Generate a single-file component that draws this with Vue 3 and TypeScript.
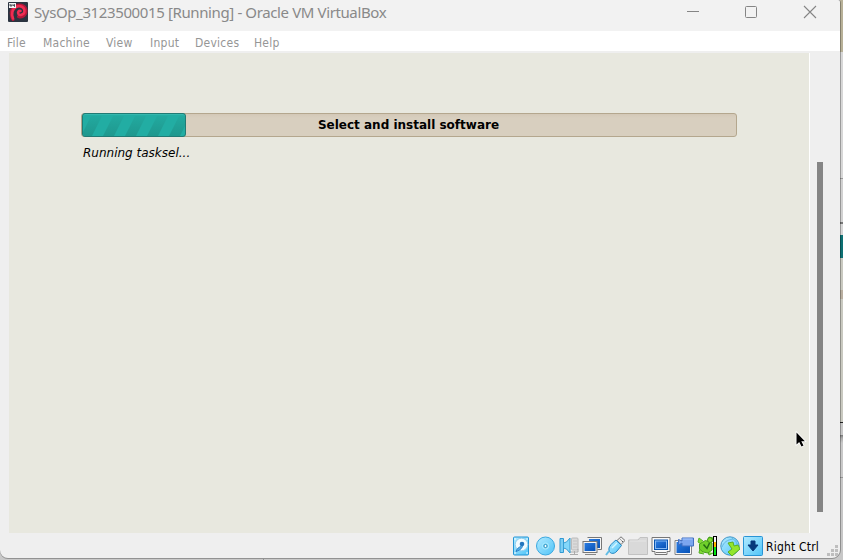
<script setup lang="ts">
interface MenuItem {
  label: string
}

const menu: MenuItem[] = [
  { label: 'File' },
  { label: 'Machine' },
  { label: 'View' },
  { label: 'Input' },
  { label: 'Devices' },
  { label: 'Help' },
]

const progress = 16
const stripes: number[] = [0, 1, 2, 3, 4]
</script>

<template>
  <div class="desktop">
    <div class="window">
      <header class="titlebar">
        <svg class="app-icon" width="20" height="20" viewBox="0 0 20 20">
          <rect width="20" height="20" rx="1" fill="#2b3440" />
          <path d="M5 17.500C2.500 13 2.500 8 6 5c4-3.500 11-2 12 3 .8 5-3.500 8-7.500 6.500" fill="none" stroke="#b3183a" stroke-width="3" stroke-linecap="round" />
          <path d="M5 16.500C3 12 4.500 6.500 8 5c4-2 8.500 0 8.500 4 0 3.500-4.500 5-6 3-1-1.500 0-3.500 2-3" fill="none" stroke="#f02d52" stroke-width="2.600" stroke-linecap="round" />
          <rect x="1" y="1" width="7" height="5" fill="#f4f4f4" />
          <path d="M2 2v2h2V3H2M5 2v1.500h2M6.500 2v3" fill="none" stroke="#3b4048" stroke-width=".8" />
        </svg>
        <h1 class="title">SysOp_3123500015 [Running] - Oracle VM VirtualBox</h1>
        <svg class="controls" width="132" height="16" viewBox="0 0 132 16">
          <path d="M1 7.500h12" stroke="#858585" />
          <rect x="59.500" y="2.500" width="11" height="11" rx="1" fill="none" stroke="#858585" />
          <path d="M118 2l12 12M130 2l-12 12" stroke="#858585" stroke-width="1.100" />
        </svg>
      </header>

      <nav class="menubar">
        <span v-for="item in menu" :key="item.label">{{ item.label }}</span>
      </nav>

      <div class="body">
        <main class="guest">
          <div class="progress">
            <div class="bar" :style="{ width: progress + '%' }">
              <svg width="104" height="22" viewBox="0 0 104 22">
                <defs>
                  <linearGradient id="stripe" x1="0" y1="0" x2="0" y2="1">
                    <stop offset="0" stop-color="#22a99f" />
                    <stop offset="1" stop-color="#1f988e" />
                  </linearGradient>
                </defs>
                <path v-for="n in stripes" :key="n" :transform="`translate(${n * 22} 0)`" d="M8 2h11L9 22H-2Z" fill="url(#stripe)" />
              </svg>
            </div>
            <span class="progress-label">Select and install software</span>
          </div>
          <p class="detail">Running tasksel...</p>
          <svg class="cursor" width="12" height="18" viewBox="0 0 12 18">
            <path d="M1.500 1.500v12l2.700-2.500 2.300 4.500 2-1-2.200-4.300h3.600Z" fill="#000" stroke="#fff" stroke-width="1.600" paint-order="stroke" />
          </svg>
        </main>
        <aside class="scroll"><div class="thumb"></div></aside>
      </div>

      <footer class="statusbar">
        <div class="icons">
          <svg viewBox="0 0 20 20">
            <defs>
              <linearGradient id="sky" x1="0" y1="0" x2="1" y2="1"><stop stop-color="#b3eaff" /><stop offset="1" stop-color="#4fc4f8" /></linearGradient>
              <linearGradient id="blue" x1="0" y1="0" x2="1" y2="1"><stop stop-color="#2a7be0" /><stop offset="1" stop-color="#0752b7" /></linearGradient>
            </defs>
            <rect x="2.500" y="1" width="15" height="18" rx="1" fill="url(#sky)" stroke="#2394d5" />
            <circle cx="10.500" cy="8.500" r="6.300" fill="#f1fbff" stroke="#91cfee" />
            <path d="M11.500 9c0 3-2 5-6.500 6.500 1-3 3-4.500 5-5" fill="#52b2ea" stroke="#2b7fc8" />
            <circle cx="11" cy="8" r="2.300" fill="#2376bf" />
            <path d="M4 3h.1M16 3h.1M4 17h.1M16 17h.1" stroke="#fff" stroke-width="1.500" stroke-linecap="round" />
          </svg>
          <svg viewBox="0 0 20 20"><circle cx="10.500" cy="10" r="9" fill="url(#sky)" stroke="#3aa8e0" /><circle cx="10.500" cy="10" r="3.200" fill="#8fdcfa" stroke="#a4e9ff" /><circle cx="10.500" cy="10" r="1.600" fill="#fff" stroke="#238dbe" /></svg>
          <svg viewBox="0 0 20 20"><rect x="12.500" y="2" width="6.500" height="12" rx="1" fill="#dadada" stroke="#bababa" /><path d="M14 5h4M14 8h4M14 11h4" stroke="#c4c4c4" /><path d="M10 13v3h9v-3M15.500 15v3M11 18.500h8" fill="none" stroke="#ababab" /><path d="M1 2.500h3.500v14H1Z" fill="#7bcff5" stroke="#3299d2" /><path d="M4.500 7l3-1L11 2v15l-3.500-4-3-1Z" fill="#83d7fa" stroke="#399fd4" /></svg>
          <svg viewBox="0 0 20 20"><path d="M5.500 1.500h14v12h-4" fill="#f5f5f5" stroke="#777" /><rect x="7" y="3" width="11" height="9" fill="url(#blue)" /><rect x="1" y="5.500" width="14" height="11" fill="#f5f5f5" stroke="#777" /><rect x="2.500" y="7" width="11" height="8" fill="url(#blue)" /><path d="M3 18.500h11" stroke="#888" /></svg>
          <svg viewBox="0 0 20 20"><path d="M12 4.500L16 .8l4 3.700L16 8.500Z" fill="#eee" stroke="#777" /><path d="M15.500 3.500l1 1M17 5l1 1" stroke="#555" /><path d="M11 4l5.500 5.500L12 15c-3 4-9 3-8-3 .5-2 3-5 7-8Z" fill="url(#sky)" stroke="#2588c4" /><path d="M4 15l-3 4" stroke="#62bde7" stroke-width="2" /><path d="M7 12l5-5" stroke="#d3f5ff" stroke-width="1.500" /></svg>
          <svg viewBox="0 0 20 20"><path d="M.5 18.500V4H10l2-2.500h7.500v17Z" fill="#d9d9d9" stroke="#c2c2c2" /><path d="M2 5h16" stroke="#e5e5e5" /></svg>
          <svg viewBox="0 0 20 20"><path d="M1 1.500h18v14h-3v3H4v-3H1Z" fill="#f8f8f8" stroke="#777" /><rect x="3.500" y="4" width="13" height="9.500" fill="#85b9f5" stroke="#0753af" /><rect x="5" y="5.500" width="10" height="6.500" fill="url(#blue)" /><path d="M5 16.500h10" stroke="#777" /></svg>
          <svg viewBox="0 0 20 20"><path d="M1 4.500h16.500v14H1Z" fill="#f7f7f7" stroke="#858585" /><rect x="2.500" y="6" width="13.500" height="11" fill="url(#blue)" /><path d="M4.500 3.500L8 5V2h11.500v8H8V7l-3.500 2Z" fill="#7ba6ef" stroke="#416fc1" /><path d="M8.500 3h10" stroke="#a6c5ff" /></svg>
          <svg viewBox="0 0 20 20"><path d="M4 8L1 6l1-4 4 3M11 5l1-4 4 1v4M3 12l-1 5 5 1M11 16l1 3 4-2" fill="#86dc38" stroke="#55b027" stroke-linejoin="round" /><path d="M2.500 8l6-3.500L15 7v7l-4 3-5-1-3.500-3Z" fill="#70cf2b" stroke="#4ca01d" /><path d="M6.500 8.500l3.500 4L12.500 7" fill="none" stroke="#246d12" stroke-width="1.500" /><circle cx="13" cy="4" r="2.500" fill="#86dc31" stroke="#3f9818" /><rect x="16" width="4" height="20" fill="#000" /><rect x="17" y="1" width="2" height="18" fill="#00e712" /><rect x="17" y="1" width="2" height="6" fill="#f7f7f7" /><rect x="17" y="6" width="2" height="5" fill="#ffb300" /></svg>
          <svg viewBox="0 0 20 20"><circle cx="10" cy="10" r="9.200" fill="url(#sky)" stroke="#4095c6" /><path d="M2 11c2-5 5-7 11-8M12 2c3 2 5 4 5 7" fill="none" stroke="#65b8e4" /><path d="M8 7l5-1 1 4 4-1 2 4-8 7-4-4 4-3Z" fill="#93e52b" stroke="#5cb021" /></svg>
          <svg viewBox="0 0 20 20"><rect x=".5" y=".5" width="19" height="19" rx="1" fill="url(#sky)" stroke="#2994d5" /><path d="M8 5h4v4h3l-5 6-5-6h3Z" fill="#06397b" stroke="#06397b" stroke-linejoin="round" /></svg>
        </div>
        <span class="host-key">Right Ctrl</span>
        <svg class="grip" width="12" height="12" viewBox="0 0 12 12"><path d="M9 0h3v3H9ZM5 4h3v3H5ZM9 4h3v3H9ZM1 8h3v3H1ZM5 8h3v3H5ZM9 8h3v3H9Z" fill="#bebebe" /></svg>
      </footer>
    </div>
    <div class="behind">
      <div class="sand"></div><div class="pale"></div><div class="panel"></div><div class="shade"></div><div class="light"></div><div class="teal"></div><div class="gray"></div><div class="tan"></div><div class="gray rest"></div><div class="dark-line"></div><div class="lower"></div><div class="bottom"></div>
    </div>
  </div>
</template>

<style>
body { margin: 0; overflow: hidden; }
</style>

<style scoped>
.desktop { width: 843px; height: 560px; display: flex; overflow: hidden; background: linear-gradient(90deg, transparent 263px, #919191 263px, #919191 264px, transparent 264px), #c8c8c8; }
.window { width: 840px; height: 558px; flex: none; display: flex; flex-direction: column; overflow: hidden; background: #efefef; border-radius: 0 3px 8px 8px; box-shadow: 0 1px 0 #929292, 1px 0 0 rgba(0, 0, 0, .28); z-index: 1; }
.titlebar { height: 31px; flex: none; display: flex; box-sizing: border-box; padding: 2px 22px 0 8px; background: #f2f2f2; }
.app-icon { flex: none; }
.title { margin: 0 0 0 6px; font: 400 15px/20px "Noto Sans", sans-serif; color: #898989; white-space: nowrap; letter-spacing: -.38px; }
.controls { flex: none; margin: 2px 0 0 auto; }
.menubar { height: 21px; flex: none; display: grid; grid-template-columns: 36px 63px 44px 45px 59px 40px; padding-left: 7px; background: #fff; border-bottom: 1px solid #efefef; box-sizing: border-box; font: 12px/24px "DejaVu Sans Condensed", "Noto Sans", sans-serif; letter-spacing: .25px; color: #969696; }
.body { display: flex; height: 481px; padding-left: 9px; flex: none; }
.guest { width: 656px; height: 420px; padding: 60px 72px 0; margin-top: 1px; background: #e8e8df; border-right: 1px solid #fff; position: relative; }
.progress { display: grid; width: 656px; height: 24px; box-sizing: border-box; border: 1px solid #b4a78e; border-radius: 3px; background: linear-gradient(#d3c8b7, #d8cfbf 4px); }
.bar { grid-area: 1 / 1; height: 24px; max-width: 104px; box-sizing: border-box; margin: -1px 0; overflow: hidden; border: 1px solid #217b75; border-radius: 3px; background: #22ada3; box-shadow: inset 0 1px #35b7ad; }
.bar svg { display: block; }
.progress-label { grid-area: 1 / 1; margin-right: 1px; text-align: center; font: bold 12px/22px "DejaVu Sans", sans-serif; color: #000; }
.detail { margin: 8px 0 0 2px; font: italic 12px/16px "DejaVu Sans", sans-serif; color: #000; }
.cursor { position: absolute; left: 786px; top: 378px; }
.scroll { width: 30px; padding: 110px 0 0 7px; }
.thumb { width: 6px; height: 350px; background: #858585; }
.statusbar { display: flex; height: 25px; padding-left: 511px; box-sizing: border-box; align-items: flex-start; }
.icons { display: flex; gap: 3px; padding-top: 3px; }
.icons svg { width: 20px; height: 20px; flex: none; }
.icons svg:first-child, .icons svg:nth-child(2) { margin-right: 1px; }
.host-key { margin: 4px 0 0 3px; font: 12px/20px "DejaVu Sans Condensed", "Noto Sans", sans-serif; letter-spacing: .2px; color: #000; white-space: nowrap; }
.grip { flex: none; margin: 12px 2px 0 auto; }
.behind { width: 3px; height: 560px; background: #d3d3d3; }
.sand { height: 52px; background: #b8b198; }
.pale { height: 126px; background: #d7d7d7; }
.panel { height: 44px; background: #d1d1d1; border-top: 1px solid #999; box-sizing: border-box; }
.shade { height: 2px; background: #777; }
.light { height: 11px; background: #d5d5d5; }
.teal { height: 23px; background: #0d7073; }
.gray { height: 32px; background: #c9c9c0; }
.tan { height: 9px; background: #b9afa0; }
.rest { height: 123px; }
.dark-line { height: 1px; background: #222; }
.lower { height: 54px; background: linear-gradient(#c6c6c6 12px, #777 12px, #aaa 15px, #c9c9c9 20px); }
.bottom { height: 82px; background: #c7c7c7; border-top: 1px solid #979797; }
</style>
